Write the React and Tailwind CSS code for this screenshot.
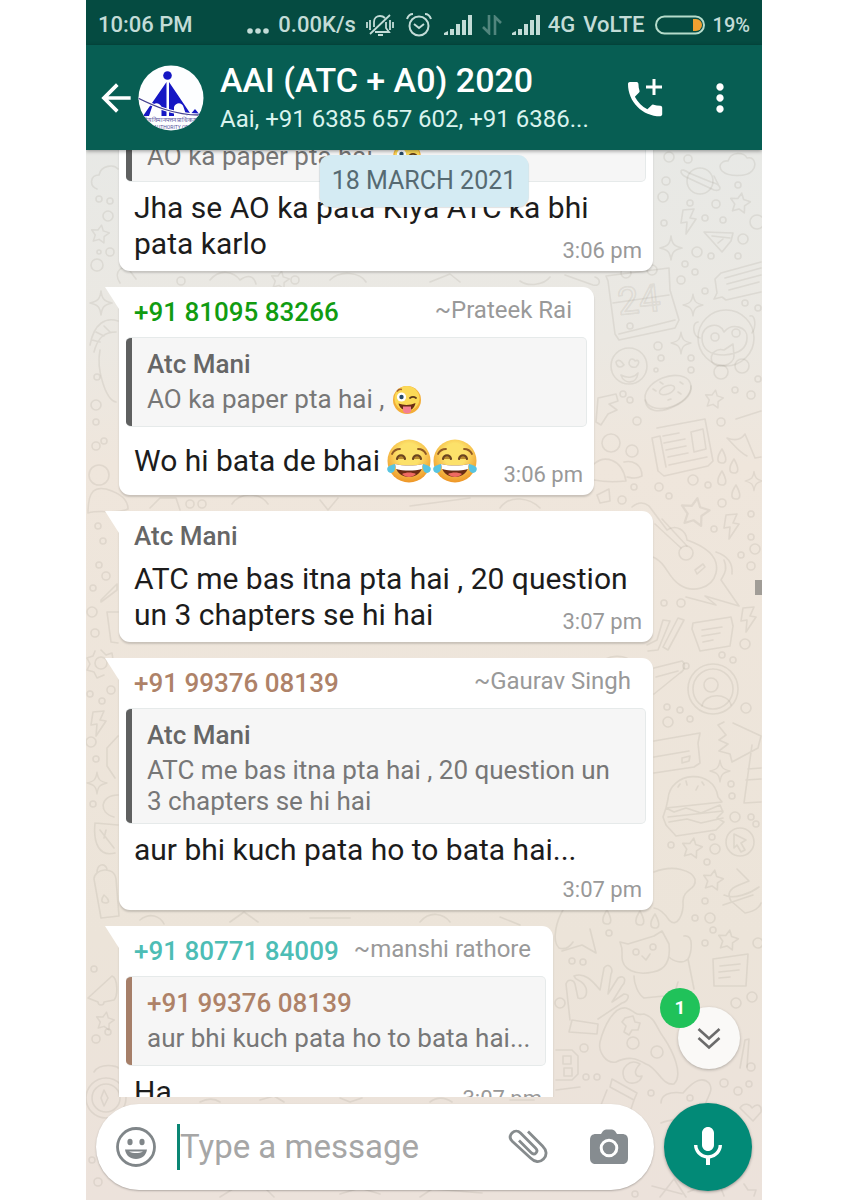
import { MdArrowBack, MdMic, MdMoreVert } from 'react-icons/md';

const messages = [
  {
    id: 1,
    width: 'w-[534px]',
    quote: { lines: ['AO ka paper pta hai ,'], emoji: true, color: 'bg-[#5f6060]' },
    text: ['Jha se AO ka pata Kiya ATC ka bhi', 'pata karlo'],
    time: '3:06 pm',
  },
  {
    id: 2,
    width: 'w-[475px]',
    sender: '+91 81095 83266',
    senderColor: 'text-[#119c11]',
    nickname: '~Prateek Rai',
    quote: {
      title: 'Atc Mani',
      titleColor: 'text-[#666666]',
      color: 'bg-[#5f6060]',
      lines: ['AO ka paper pta hai ,'],
      emoji: true,
    },
    text: ['Wo hi bata de bhai'],
    laughs: 2,
    time: '3:06 pm',
  },
  {
    id: 3,
    width: 'w-[534px]',
    sender: 'Atc Mani',
    senderColor: 'text-[#666666]',
    text: ['ATC me bas itna pta hai , 20 question', 'un 3 chapters se hi hai'],
    time: '3:07 pm',
  },
  {
    id: 4,
    width: 'w-[534px]',
    sender: '+91 99376 08139',
    senderColor: 'text-[#ae8268]',
    nickname: '~Gaurav Singh',
    quote: {
      title: 'Atc Mani',
      titleColor: 'text-[#666666]',
      color: 'bg-[#5f6060]',
      lines: ['ATC me bas itna pta hai , 20 question un', '3 chapters se hi hai'],
    },
    text: ['aur bhi kuch pata ho to bata hai...'],
    time: '3:07 pm',
    timeBelow: true,
  },
  {
    id: 5,
    width: 'w-[434px]',
    sender: '+91 80771 84009',
    senderColor: 'text-[#4dbdb5]',
    nickname: '~manshi rathore',
    quote: {
      title: '+91 99376 08139',
      titleColor: 'text-[#ae8268]',
      color: 'bg-[#a67f69]',
      lines: ['aur bhi kuch pata ho to bata hai...'],
    },
    text: ['Ha'],
    time: '3:07 pm',
  },
];

function LaughEmoji() {
  return (
    <svg viewBox="0 0 46 44" className="inline-block h-11 w-[46px]" role="img" aria-label="laughing">
      <defs>
        <radialGradient id="laughFace" cx="0.5" cy="0.35" r="0.65">
          <stop offset="0.4" stopColor="#fce16a" />
          <stop offset="1" stopColor="#ee9526" />
        </radialGradient>
      </defs>
      <circle cx="23" cy="22" r="21.5" fill="url(#laughFace)" />
      <path d="M6 15c2-4 5-5 8-5M40 15c-2-4-5-5-8-5" fill="none" stroke="#8f5a26" strokeWidth="1.8" strokeLinecap="round" />
      <path d="M11 20c1-5 7-5 8 0M27 20c1-5 7-5 8 0" fill="#b98a2c" stroke="#6b4420" strokeWidth="2.2" strokeLinecap="round" />
      <path d="M9 25c9 2 19 2 28 0-1 8-6 13-14 13S10 33 9 25z" fill="#6b2c14" />
      <path d="M9 25c9 2 19 2 28 0l-1 5c-8 2-18 2-26 0z" fill="#fff" />
      <path d="M16 35c4-2 10-2 14 0-4 4-10 4-14 0z" fill="#ef6a62" />
      <path d="M9 25c1 5-1 9-4 9s-5-4-3-6 4-2 7-3zM37 25c-1 5 1 9 4 9s5-4 3-6-4-2-7-3z" fill="#58c4e0" />
    </svg>
  );
}

function WinkEmoji() {
  return (
    <svg viewBox="0 0 30 30" className="ml-2 inline-block h-[30px] w-[30px]" role="img" aria-label="winking">
      <circle cx="15" cy="15" r="14" fill="#f3ad36" />
      <circle cx="15" cy="13.5" r="12.5" fill="#fbd957" />
      <circle cx="9.5" cy="12" r="4.6" fill="#fff" />
      <circle cx="9.5" cy="12" r="2.2" fill="#274a66" />
      <path d="M5 6.5c1-1.500 3-2.500 5-2" fill="none" stroke="#a8642b" strokeWidth="1.4" />
      <path d="M18 13c2-1.500 4-1.500 6 0" fill="none" stroke="#5f3a1a" strokeWidth="1.8" strokeLinecap="round" />
      <path d="M6.500 18.500c5 2 12 2 17-.5-1 5-4 7.500-8.500 7.500s-7.500-3-8.500-7z" fill="#6b2c14" />
      <path d="M11 21.500h8v4c0 4-8 4-8 0z" fill="#f57f92" />
    </svg>
  );
}

function SignalIcon() {
  return (
    <svg viewBox="0 0 28 20" className="h-5 w-7" fill="currentColor" aria-hidden="true">
      <path d="M0 20v-2l4-2v4zM6 14h4v6H6zM12 9h4v11h-4zM18 5h4v15h-4zM24 0h4v20h-4z" />
    </svg>
  );
}

function StatusBar() {
  return (
    <div className="flex h-[45px] shrink-0 items-center bg-[#054b41] pl-3 pr-3 pt-1 text-[22px] leading-7 font-medium text-[#c3dcd7]">
      <span>10:06 PM</span>
      <div className="ml-auto flex items-center">
        <svg viewBox="0 0 24 20" className="h-5 w-6" fill="currentColor" aria-hidden="true">
          <circle cx="4" cy="16" r="2.8" />
          <circle cx="12" cy="16" r="2.8" />
          <circle cx="20" cy="16" r="2.8" />
        </svg>
        <span className="ml-2">0.00K/s</span>
        <svg viewBox="0 0 28 24" className="ml-2.5 h-6 w-7" fill="none" stroke="currentColor" strokeWidth="1.8" aria-hidden="true">
          <path d="M4 21L24 2M8 14V9c0-4 3-6 6-6 2 0 4 1 5 2M20 9v6l3 4H9M12 22h5M1 9v6M4 7v10M24 7v10M27 9v6" />
        </svg>
        <svg viewBox="0 0 26 26" className="ml-3 h-[26px] w-[26px]" fill="none" stroke="currentColor" strokeWidth="2" aria-hidden="true">
          <circle cx="13" cy="14" r="9.5" />
          <path d="M8 12l5 4 5-4M1 7c1-3 3-5 6-5M25 7c-1-3-3-5-6-5" />
        </svg>
        <span className="ml-3">
          <SignalIcon />
        </span>
        <svg viewBox="0 0 20 20" className="ml-2.5 h-5 w-5 opacity-40" fill="none" stroke="currentColor" strokeWidth="2.6" aria-hidden="true">
          <path d="M7 0v18L1 12M13 20V2l6 6" />
        </svg>
        <span className="ml-2.5">
          <SignalIcon />
        </span>
        <span className="ml-2">4G</span>
        <span className="ml-2">VoLTE</span>
        <svg viewBox="0 0 50 20" className="ml-2.5 h-5 w-[50px]" aria-hidden="true">
          <rect x="1" y="1.5" width="48" height="17" rx="8.5" fill="none" stroke="#b5dccb" strokeWidth="2" />
          <path d="M38 4h3a6 6 0 0 1 0 12h-3z" fill="#f0a030" />
        </svg>
        <span className="ml-2 text-[20px]">19%</span>
      </div>
    </div>
  );
}

function GroupAvatar() {
  return (
    <svg viewBox="0 0 66 66" className="h-[66px] w-[66px] shrink-0" role="img" aria-label="Group photo">
      <defs>
        <clipPath id="avatarClip">
          <circle cx="33" cy="33" r="32.5" />
        </clipPath>
      </defs>
      <g clipPath="url(#avatarClip)">
        <rect width="66" height="66" fill="#fdfeff" />
        <g fill="#1517c4">
          <circle cx="29.5" cy="10.5" r="4.3" />
          <path d="M28.500 17v34h-5V42c-2-5-8-5-9.500 0l-3 9H5z" />
          <path d="M31 17v34h5V42c2-5 8-5 9.500 0l3 9H54z" />
          <path d="M51 51l11-1-5-6z" />
        </g>
        <path d="M0 33c16 8 36 17 61 17" fill="none" stroke="#fff" strokeWidth="3" />
        <path d="M0 33c16 8 36 17 61 17" fill="none" stroke="#45428f" strokeWidth="1.3" />
        <text x="33" y="57" textAnchor="middle" fontSize="6" fill="#55539c">तीय विमानपत्तन प्राधिकरण</text>
        <text x="33" y="64" textAnchor="middle" fontSize="5" fill="#55539c">AUTHORITY OF</text>
      </g>
    </svg>
  );
}

function ChatHeader() {
  return (
    <header className="relative z-10 flex h-[105px] shrink-0 items-center bg-[#075e53] pl-2 pr-5 text-white shadow-[0_1px_4px_rgba(0,0,0,0.4)]">
      <button type="button" aria-label="Back" className="shrink-0">
        <MdArrowBack size={44} />
      </button>
      <GroupAvatar />
      <div className="ml-4 min-w-0 flex-1">
        <h1 className="truncate text-[34px] leading-[42px] font-medium">AAI (ATC + A0) 2020</h1>
        <p className="truncate text-[24px] leading-9 text-[#d9f3ee]">Aai, +91 6385 657 602, +91 6386...</p>
      </div>
      <button type="button" aria-label="Group call" className="mr-8 shrink-0">
        <svg viewBox="0 0 40 40" className="h-10 w-10" fill="currentColor">
          <path
            transform="translate(-3.7 -1.7) scale(1.9)"
            d="M6.620 10.790c1.440 2.830 3.760 5.140 6.590 6.590l2.200-2.200c.27-.27.67-.36 1.020-.24 1.120.37 2.330.57 3.570.57.55 0 1 .45 1 1V20c0 .55-.45 1-1 1-9.390 0-17-7.610-17-17 0-.55.45-1 1-1h3.500c.55 0 1 .45 1 1 0 1.250.2 2.450.57 3.570.11.35.03.74-.25 1.020l-2.200 2.200z"
          />
          <path d="M28 1v16M20 9h16" stroke="currentColor" strokeWidth="3" />
        </svg>
      </button>
      <button type="button" aria-label="More options" className="shrink-0">
        <MdMoreVert size={44} />
      </button>
    </header>
  );
}

function Star({ x, y, s = 1 }) {
  return (
    <path transform={`translate(${x} ${y}) scale(${s}) rotate(10)`} d="M0-10l3 6 7 1-5 5 1 7-6-3-6 3 1-7-5-5 7-1z" />
  );
}

function Sparkle({ x, y, s = 1 }) {
  return (
    <path transform={`translate(${x} ${y}) scale(${s})`} d="M0-12c1 8 3 10 11 12-8 2-10 4-11 12-1-8-3-10-11-12 8-2 10-4 11-12z" />
  );
}

function Bolt({ x, y }) {
  return <path transform={`translate(${x} ${y})`} d="M-5-12l11-1-4 9 6 1-10 15 1-12-6 1z" />;
}

function Drop({ x, y }) {
  return <path transform={`translate(${x} ${y})`} d="M0-8c-6 9-5 14 0 14s5-5 0-14z" />;
}

const dots = [
  [669, 157, 5], [688, 159, 4], [666, 181, 4], [663, 197, 5], [690, 203, 3], [716, 204, 4], [738, 185, 3],
  [705, 218, 3], [723, 220, 3], [757, 222, 7], [743, 239, 5], [664, 223, 3], [697, 252, 5], [711, 256, 3],
  [738, 256, 3], [685, 264, 3], [695, 272, 3], [681, 280, 4], [705, 291, 3], [745, 303, 3], [758, 308, 3],
  [658, 346, 4], [661, 358, 3], [691, 358, 3], [691, 370, 3], [656, 370, 2], [630, 326, 3], [758, 379, 3],
  [735, 390, 3], [751, 395, 4], [623, 394, 3], [630, 400, 3], [637, 421, 4], [721, 422, 4], [634, 487, 3],
  [659, 487, 4], [669, 496, 3], [693, 480, 5], [708, 485, 3], [722, 503, 4], [622, 500, 4], [751, 514, 3],
  [714, 529, 3], [751, 537, 3], [755, 549, 5], [741, 555, 3], [751, 566, 4], [681, 603, 4], [664, 603, 3],
  [745, 644, 5], [722, 655, 3], [686, 666, 3], [733, 660, 3], [667, 707, 3], [680, 710, 3], [668, 722, 5],
  [690, 719, 3], [746, 708, 5], [731, 784, 3], [732, 796, 3], [735, 817, 5], [751, 817, 3], [756, 824, 3],
  [712, 837, 3], [715, 849, 5], [671, 845, 3], [707, 862, 3], [705, 901, 3], [710, 918, 5], [695, 918, 3],
  [713, 930, 3], [609, 933, 3], [705, 943, 3], [572, 961, 3], [583, 962, 3], [758, 943, 5], [736, 1003, 5],
  [752, 997, 5], [584, 1048, 4], [586, 1077, 3], [597, 1077, 3], [651, 1093, 3], [724, 1083, 4], [738, 1091, 4],
  [749, 1084, 3], [751, 1067, 4], [99, 199, 3], [110, 201, 3], [108, 216, 5], [99, 252, 2], [110, 252, 4],
  [97, 265, 6], [97, 377, 3], [96, 405, 5], [96, 422, 3], [96, 446, 4], [104, 441, 3], [181, 281, 4],
  [295, 280, 4], [190, 504, 4], [202, 504, 4], [98, 526, 3], [103, 541, 3], [99, 565, 3], [106, 576, 4],
  [93, 588, 3], [92, 612, 5], [95, 633, 4], [90, 694, 3], [102, 701, 3], [111, 690, 4], [91, 742, 5],
  [96, 759, 3], [93, 804, 3], [94, 969, 3], [96, 1039, 4], [108, 1032, 3], [92, 1160, 3], [98, 1182, 4],
  [560, 1003, 5], [635, 1194, 3], [690, 1098, 3],
];

function Wallpaper() {
  return (
    <svg
      viewBox="86 150 676 1050"
      preserveAspectRatio="xMidYMin slice"
      className="absolute inset-0 h-full w-full"
      aria-hidden="true"
    >
      <defs>
        <linearGradient id="wall" x1="0" y1="0" x2="0" y2="1">
          <stop offset="0" stopColor="#e8e9e6" />
          <stop offset="0.18" stopColor="#ebe8e2" />
          <stop offset="0.3" stopColor="#efe6dc" />
          <stop offset="0.75" stopColor="#ece4d9" />
          <stop offset="1" stopColor="#ece2db" />
        </linearGradient>
      </defs>
      <rect x="86" y="150" width="676" height="1050" fill="url(#wall)" />
      <g fill="none" stroke="#8a8478" strokeOpacity="0.15" strokeWidth="1.6" strokeLinejoin="round" strokeLinecap="round">
        {dots.map(([cx, cy, r]) => (
          <circle key={`${cx}-${cy}`} cx={cx} cy={cy} r={r} />
        ))}

        <path d="M97 189c-8-3-7-14 2-14 2-10 15-11 19-6M722 171c-5-6 1-11 6-10 3-10 16-9 19-3 8-2 10 8 5 13-5 6-24 6-30 0z" />
        <circle cx="700" cy="181" r="13" />
        <path d="M689 173c-9-7-11 0-3 4l28 13c8 2 9-5-3-8zM714 176l6 12" />
        <path d="M704 232l29 1-2 8-9 11zM712 236l18 2M718 243l5-4" />
        <path d="M761 262l-40 11-6 6 2 14-3 6 8-2 4 3 35-8M725 278l36-10M727 284l34-9M729 290l30-8" />
        <path d="M606 276l63-8 1 22 9 30-4 8-56 12-4-6-7-53zM619 334l56-14M613 303l56-8" />
        <circle cx="626" cy="273" r="5" />
        <circle cx="652" cy="270" r="5" />
        <text x="619" y="315" fontFamily="Roboto, sans-serif" fontSize="38" transform="rotate(-6 619 315)">24</text>
        <circle cx="726" cy="338" r="28" />
        <path d="M702 338c0-14 18-17 22-6 8-10 24-5 23 6 0 11-9 16-23 17-14 0-22-6-22-17zM712 362c-3-9 5-14 12-12l9-6 1 12c0 9-17 14-22 6zM698 322c-6 0-6 14 2 16M750 316c6-2 6 12 2 17" />
        <circle cx="715" cy="337" r="4" />
        <circle cx="736" cy="333" r="4" />
        <circle cx="721" cy="372" r="7" />
        <circle cx="742" cy="366" r="7" />
        <circle cx="629" cy="366" r="18" />
        <path d="M616 362c3-4 6 0 8 3-3 3-7 3-8-3zM629 363c1-6 5-4 6-2 3-2 6 1 1 6-4 1-7-1-7-4zM621 375c7 4 14 2 17-2-1 11-14 12-17 2z" />
        <ellipse cx="668" cy="392" rx="24" ry="15" transform="rotate(-22 668 392)" />
        <ellipse cx="667" cy="390" rx="8" ry="4" transform="rotate(-22 667 390)" />
        <path d="M645 400c2 12 14 14 30 6 12-6 17-12 16-20M653 389l3 2M660 382l3 2M680 382l3 2M678 392l3 2M668 400l3-1" />
        <path d="M598 398l18-4 2 7-9 3 8 6-9 4-7 11-5-3z" />
        <path d="M657 428l48-9 8 42-5 5-44 10-6-5-6-33 8-2 6 31M663 436l16-3M664 443l21-4M666 450l20-4M668 457l20-4M669 465l38-8M691 432l12-3 3 20-12 3z" />
        <path d="M727 438c8 3 14 2 18-4l10 24 6-1M727 438c8 8 12 14 20 18M736 419l25-8" />
        <circle cx="611" cy="443" r="9" />
        <circle cx="632" cy="451" r="6" />
        <path d="M594 464c10-9 28-6 32 17-10 1-22 1-32-1M624 462c8-2 18 2 18 14-6 3-10 2-15 1M597 495l12-6 1 12-10 2z" />
        <Star x={695} y={512} s={1.4} />
        <Star x={740} y={203} />
        <Star x={714} y={399} s={0.9} />
        <Star x={692} y={848} />
        <Star x={713} y={880} />
        <Star x={728} y={940} />
        <Star x={100} y={234} s={0.9} />
        <Star x={105} y={1021} s={0.9} />
        <Star x={280} y={280} s={0.9} />
        <Sparkle x={671} y={248} />
        <Sparkle x={693} y={305} s={0.9} />
        <Sparkle x={681} y={343} s={0.9} />
        <Sparkle x={754} y={481} s={0.8} />
        <Sparkle x={720} y={771} s={0.9} />
        <Sparkle x={97} y={783} s={0.9} />
        <Sparkle x={101} y={303} />
        <Bolt x={688} y={222} />
        <Bolt x={731} y={527} />
        <Bolt x={748} y={620} />
        <Bolt x={98} y={724} />
        <Drop x={722} y={457} />
        <Drop x={734} y={467} />
        <Drop x={722} y={479} />
        <Drop x={736} y={493} />
        <Drop x={607} y={918} />
        <Drop x={640} y={919} />
        <Drop x={655} y={922} />

        <path d="M632 507c6-5 12-5 17-1l18 24c9-6 19 0 20 10 17 6 33 16 29 33-4 16-24 20-36 12-13-8-12-20-25-27-10-4-18-16-9-24" />
        <circle cx="686" cy="553" r="7" />
        <path d="M655 524l26 24M662 519l25 27M695 570l8-6 2 3-8 7zM716 552c12 4 17 12 16 22M724 560c4 10 0 14-3 20l18 26-34-10 11 9-30-8" />
        <path d="M648 651l10-1 12-29-7-1-6 20-10 5M668 650l16-30-6-2-15 29zM693 623l38-6 2 9-3 20-30 5-8-22zM702 630l20-3M702 636l18-3M703 642l10-2" />
        <path d="M600 665c6-11 26-12 34-1M606 660l20 2M654 668l28-7c4 3 3 9-2 12l-26 21M656 677l22-6" />
        <circle cx="713" cy="689" r="25" />
        <circle cx="713" cy="689" r="20" />
        <circle cx="711" cy="685" r="7" />
        <path d="M702 706c2-13 26-14 29-1M724 722l-6 3 8 10-7 5 9 4-9 7 11 3 2 8 26-14 3-12-28-13M752 745l-8 58 17-1M748 769l13-1M746 780l15-1" />
        <path d="M654 741l46-8-2 10 2 20-6 4-40 6M654 757l35-6M682 758l8-2-1 5-7 2z" />
        <path d="M668 799c2-28 46-31 50-2l4 5-56 6zM666 808l8 4 12-4 15 5 19-8 3 7-6 6 7 4-8 8-40 6-10-11-3-8zM668 817l55-6M669 822l18-3 14 4 22-5M678 787l2-3M687 785l-1-4M696 790l2-4M704 785l-2-3" />
        <circle cx="740" cy="842" r="14" />
        <path d="M734 834l12 6-5 3 4 7-4 2-4-7-3 3zM737 869l12 12-10 4c-10 4-12 9-8 16l14 12c14-2 16-10 16-10M724 895c10 5 27-2 35-8M723 905l30-10" />
        <path d="M654 872c20-8 38-1 41 7 2 11-12 10-12 22 1 13-6 28-14 19-4-6-8-11-15-12" />
        <path d="M620 942l8 2 26-8 8-5 7 13c2 18-4 26-16 28-18 4-31-3-31-15 0-5 1-8-2-15zM642 956l4 4 4-6M684 936c11-2 7 18 4 23-5 5-14 3-19-2M688 959l6 30M634 976c0 8 4 18 10 22l20-2 8 6 6-20" />
        <circle cx="636" cy="952" r="3" />
        <circle cx="653" cy="947" r="3" />
        <path d="M713 959l35-5-2 32-32 0zM720 966l20-2M719 972l20-2M719 978l11-1" />
        <path d="M572 1020l26 4-1 10-28-2zM570 1020l-4-36c2-6 8-4 9 0l3 14c6 2 10-2 8-10-4-10-10-6-12-12 10-4 18 4 26 14l4-22c4-6 10 0 7 6l-3 20 10-16c8-4 8 4 4 8l-10 16 12-8c8 0 3 8-2 9l-24 16" />
        <path d="M600 1042c4-16 14-36 26-34 8 2 8 8 18 6 12 4 12 14 20 24 8 12 20 36 10 46-12 2-16-16-28-20-10-6-18-8-30-2-10 2-18-10-16-20z" />
        <path d="M625 1018l8-2 2 6 5 1-2 7-6 0-3 5-5-3 2-6-4-4z" />
        <circle cx="633" cy="1043" r="6" />
        <circle cx="657" cy="1052" r="6" />
        <path d="M640 1064c-10-6-20 4-16 14 4 8 16 6 18-2-6 2-10-4-2-12zM612 1079l25 14-3 7-24-13zM607 1090l-6 15M634 1100l-4 12M556 1050h16l6 6v18l-6 6h-16M556 1090l24-3M563 1056h8v8h-8zM564 1068h8v8h-8z" />
        <path d="M661 1103c0-8 8-12 22-10 12-14 20-16 26-10 6 8-4 16-4 24-10 14-30 10-44 16M740 1108c4-6 10-4 12 0 6-6 10-2 9 4l-8 9zM740 1068l5-28 4-1-2 28" />
        <path d="M563 910c-6 10-12 30-4 38 6 2 10 0 14-6M590 929l6 24-14-8-20 6" />
        <path d="M652 1186l30 8M660 1197l14-18 12 18M688 1192l30-12 6 16M744 1184l4 6 8 0-2 6M220 1197l16-10 30 2 8 8M420 1197l12-8 50 4M340 1194l20-6 20 6" />

        <path d="M90 345c4-22 16-28 28-24M94 352c4-16 12-20 22-20M100 350c-4 20 6 50 16 52M92 340l8 2M96 332l8 4M104 326l6 6" />
        <circle cx="99" cy="475" r="10" />
        <path d="M88 513c0-24 8-26 18-24 14 4 22 10 22 20-14 6-26 0-40 4M150 508l10-10h16l4 12M232 504c8-12 28-12 36 0M320 500l8 10 10-12M410 506l60-8M500 508c10-14 30-10 40 0M120 283c-8-12 4-20 10-12l6 8M210 280c10-12 24-8 30 0 8-6 14-4 16 4M330 280c10-10 30-8 36 2M430 282l20-8 10 8M520 281c8 6 24 4 30-4M565 275l28 10c8 2 8-6 2-8" />
        <path d="M101 600l16-16v6l-16 12zM107 612h11M107 612l4 30 7 1" />
        <circle cx="101" cy="663" r="6" />
        <path d="M101 650l5 5 6-2 1 7 6 2M95 651l-2 5-6 2 3 6-3 6 7 2 3 6 7-3M107 748l11-12M107 748v18l8 12M118 795c-18 0-20 18-4 22M95 823l23 2M95 823c-2 20 4 34 20 30M100 830l14 18M104 838l2-8M94 879c0-10 20-14 22 0l3 37-18 2zM97 873c0-10 8-10 10-4M104 895c-4 6-2 8 2 8s3-4-2-8z" />
        <path d="M88 998l24-22c6 2 6 20 2 24l-10 2c0 4-6 4-6 0zM94 1072c6-10 24-6 24-4M140 920c10-8 20-4 24 4M230 922l14-10 14 10M310 918h40M420 922c10-12 24-8 30 0M500 917l20 8" />
        <circle cx="106" cy="1098" r="20" />
        <circle cx="106" cy="1098" r="14" />
        <path d="M104 1090l4 8-4 8-3-8z" />
        <path d="M200 1102c8-4 14-4 20 0M260 1100l14-4 10 6M340 1098l10 4 12-4M430 1102c8-6 16-4 22 0M510 1100h24" />
      </g>
    </svg>
  );
}

function Quote({ quote }) {
  return (
    <blockquote className="mx-[7px] flex overflow-hidden rounded-[5px] border border-l-0 border-[#e6eaea] bg-[#f6f6f6]">
      <span className={`w-1.5 shrink-0 ${quote.color}`} />
      <div className={quote.title ? 'min-h-[88px] pl-[15px] pt-[9px] pb-1.5' : 'pl-[15px] pt-1.5 pb-[9px]'}>
        {quote.title && (
          <p className={`mb-[3px] text-[26px] leading-[34px] font-medium ${quote.titleColor}`}>{quote.title}</p>
        )}
        {quote.lines.map((line) => (
          <p key={line} className="flex items-center text-[26px] leading-[31px] whitespace-nowrap text-[#777777]">
            {line}
            {quote.emoji && <WinkEmoji />}
          </p>
        ))}
      </div>
    </blockquote>
  );
}

function Message({ message }) {
  const { sender, quote, laughs, timeBelow } = message;

  return (
    <li className={`relative max-w-full rounded-[11px] bg-white pb-[9px] shadow-[0_2px_2px_rgba(0,0,0,0.16)] ${message.width}`}>
      {sender && (
        <svg viewBox="0 0 28 22" className="absolute top-0 -left-[14px] h-[22px] w-7" fill="#fff" aria-hidden="true">
          <path d="M0 0h28v22H14z" />
        </svg>
      )}
      {sender && (
        <div className="relative flex h-[50px] items-center justify-between pl-[15px] pr-[22px] whitespace-nowrap">
          <span className={`text-[26px] leading-8 font-medium ${message.senderColor}`}>{sender}</span>
          {message.nickname && <span className="mb-1 text-[24px] leading-7 text-[#999999]">{message.nickname}</span>}
        </div>
      )}
      {quote && <Quote quote={quote} />}
      <div
        className={`flex justify-between pl-[15px] pr-[11px] ${quote ? 'mt-2' : ''} ${timeBelow ? 'flex-col gap-[11px]' : 'items-end'}`}
      >
        <div className={`min-w-0 flex-1 text-[30px] whitespace-nowrap text-[#1c1c1c] ${laughs ? 'flex items-center leading-[51px]' : 'leading-9'}`}>
          {message.text.map((line) => (
            <p key={line}>{line}</p>
          ))}
          {laughs && (
            <span className="ml-1.5 flex">
              {Array.from({ length: laughs }, (_, i) => (
                <LaughEmoji key={i} />
              ))}
            </span>
          )}
        </div>
        <time className="self-end text-[22px] leading-[22px] whitespace-nowrap text-[#999999]">{message.time}</time>
      </div>
    </li>
  );
}

function Composer() {
  return (
    <form className="relative flex shrink-0 items-center gap-2.5 px-2.5 pt-1.5 pb-[9px]" onSubmit={(e) => e.preventDefault()}>
      <div className="flex h-[86px] min-w-0 flex-1 items-center rounded-full bg-white pl-5 pr-[26px] shadow-[0_1px_2px_rgba(0,0,0,0.25)]">
        <button type="button" aria-label="Emoji" className="shrink-0 text-[#808689]">
          <svg viewBox="0 0 40 40" className="h-10 w-10" fill="currentColor">
            <circle cx="20" cy="20" r="18.5" fill="none" stroke="currentColor" strokeWidth="2.8" />
            <ellipse cx="14" cy="15" rx="2.6" ry="3.2" />
            <ellipse cx="26" cy="15" rx="2.6" ry="3.2" />
            <path d="M9 22.500h22c-1 6-5 9.500-11 9.500S10 28.500 9 22.500zm4 2c4 2 10 2 14 0z" fillRule="evenodd" />
          </svg>
        </button>
        <input
          type="text"
          aria-label="Type a message"
          placeholder="Type a message"
          className="ml-[21px] h-[46px] min-w-0 flex-1 border-l-[3px] border-[#0a8674] text-[33px] text-[#1c1c1c] outline-none placeholder:text-[#a6a6a6]"
        />
        <button type="button" aria-label="Attach" className="mr-[42px] shrink-0 text-[#868b8d]">
          <svg viewBox="0 0 40 40" className="h-10 w-10" fill="none" stroke="currentColor" strokeWidth="2.8">
            <path d="M20 4.500l14.500 14.500c4 4 5 9 1 13s-9 3-13-1L4.500 14.500c-3-3-3-6-.5-8.500s6-2.500 8.500 0l15 15c2 2 2 3.500.5 5s-3 1.500-5-.5L11 13.500" />
          </svg>
        </button>
        <button type="button" aria-label="Camera" className="shrink-0 text-[#868c90]">
          <svg viewBox="0 0 38 36" className="h-9 w-[38px]">
            <path d="M6 5h5l2-3c1-1 2-1.500 3-1.500h6c1 0 2 .5 3 1.500l2 3h5c4 0 6 2 6 6v18c0 4-2 6-6 6H6c-4 0-6-2-6-6V11c0-4 2-6 6-6z" fill="currentColor" />
            <circle cx="19" cy="19" r="7.8" fill="none" stroke="#fff" strokeWidth="3" />
          </svg>
        </button>
      </div>
      <button
        type="button"
        aria-label="Record voice message"
        className="flex h-[88px] w-[88px] shrink-0 items-center justify-center rounded-full bg-[#028a77] text-white shadow-[0_1px_3px_rgba(0,0,0,0.35)]"
      >
        <MdMic size={48} />
      </button>
    </form>
  );
}

export default function App() {
  return (
    <div className="min-h-screen bg-white font-['Roboto',sans-serif]">
      <div className="mx-auto flex h-screen max-w-[676px] flex-col overflow-hidden">
        <StatusBar />
        <ChatHeader />
        <main className="relative flex min-h-0 flex-1 flex-col">
          <Wallpaper />
          <section className="relative min-h-0 flex-1 overflow-hidden">
            <ul className="-mt-4 flex flex-col gap-4 pl-[33px]">
              {messages.map((message) => (
                <Message key={message.id} message={message} />
              ))}
            </ul>
            <div className="absolute top-[5px] left-1/2 -translate-x-1/2 rounded-[11px] bg-[#d4ebf3] px-3 py-2.5 text-[25px] leading-8 whitespace-nowrap text-[#566a72] shadow-[0_1px_1px_rgba(0,0,0,0.12)]">
              18 MARCH 2021
            </div>
            <div className="absolute top-[430px] right-0 h-[15px] w-[7px] bg-[#a19d97]" />
            <button
              type="button"
              aria-label="Scroll to latest, 1 unread"
              className="absolute right-[22px] bottom-7 flex h-[62px] w-[62px] items-center justify-center rounded-full bg-[#faf9f7] shadow-[0_1px_3px_rgba(0,0,0,0.25)]"
            >
              <svg viewBox="0 0 24 24" className="h-6 w-6" fill="none" stroke="#6b6b6b" strokeWidth="2.6">
                <path d="M1.500 3L12 12.500 22.500 3M1.500 12L12 21.500 22.500 12" />
              </svg>
              <span className="absolute -top-[19px] -left-[18px] flex h-10 w-10 items-center justify-center rounded-full bg-[#20c25a] text-[19px] font-bold text-white">
                1
              </span>
            </button>
          </section>
          <Composer />
        </main>
      </div>
    </div>
  );
}
